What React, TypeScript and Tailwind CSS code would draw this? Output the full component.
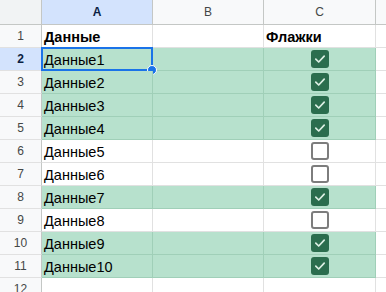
import React from "react";

type Row = { label: string; bold?: boolean; checked?: boolean | null; green?: boolean };

const ROWS: Row[] = [
  { label: "Данные", bold: true, checked: null },
  { label: "Данные1", checked: true, green: true },
  { label: "Данные2", checked: true, green: true },
  { label: "Данные3", checked: true, green: true },
  { label: "Данные4", checked: true, green: true },
  { label: "Данные5", checked: false },
  { label: "Данные6", checked: false },
  { label: "Данные7", checked: true, green: true },
  { label: "Данные8", checked: false },
  { label: "Данные9", checked: true, green: true },
  { label: "Данные10", checked: true, green: true },
  { label: "", checked: null },
];

function Checkbox({ checked }: { checked: boolean }) {
  if (!checked) {
    return (
      <div className="h-[18px] w-[18px] rounded-[3px] border-2 border-[#7d7d7d] bg-white" />
    );
  }
  return (
    <div className="flex h-[18px] w-[18px] items-center justify-center rounded-[3px] bg-[#2b6d4e]">
      <svg width="14" height="14" viewBox="0 0 14 14" fill="none">
        <path
          d="M2.8 7.2 L5.7 10 L11.2 4.2"
          stroke="#dcefe4"
          strokeWidth="1.7"
          strokeLinecap="round"
          strokeLinejoin="round"
        />
      </svg>
    </div>
  );
}

export default function App() {
  return (
    <div
      className="h-[292px] w-[386px] overflow-hidden bg-white text-black"
      style={{ fontFamily: '"Liberation Sans", Arial, sans-serif' }}
    >
      {/* column headers */}
      <div className="flex h-[25px] border-b border-[#c4c7c5] bg-[#f8f9fa] text-[12px] text-[#444746]">
        <div className="w-[42px] shrink-0 border-r border-[#c4c7c5] bg-[#f1f3f4]" />
        <div className="flex w-[111px] shrink-0 items-center justify-center border-r border-[#c4c7c5] bg-[#d3e3fd] font-bold text-[#0b1f44]">
          A
        </div>
        <div className="flex w-[111px] shrink-0 items-center justify-center border-r border-[#c4c7c5]">
          B
        </div>
        <div className="flex w-[112px] shrink-0 items-center justify-center border-r border-[#c4c7c5]">
          C
        </div>
        <div className="flex-1" />
      </div>

      {ROWS.map((r, i) => {
        const n = i + 1;
        const sel = n === 2;
        const cell = r.green
          ? "bg-[#b7e1cd] border-[#a0cfb8]"
          : "bg-white border-[#e1e1e1]";
        return (
          <div key={n} className="flex h-[23px]">
            <div
              className={`flex w-[42px] shrink-0 items-center justify-center border-r border-b border-r-[#c4c7c5] border-b-[#e1e1e1] text-[12px] ${
                sel ? "bg-[#d3e3fd] font-bold text-[#0b1f44]" : "bg-[#f8f9fa] text-[#444746]"
              }`}
            >
              {n}
            </div>
            <div
              className={`relative flex w-[111px] shrink-0 items-end border-r border-b pb-[1px] pl-[2px] text-[14.5px] leading-[18px] ${cell} ${
                r.bold ? "font-bold" : ""
              }`}
            >
              {r.label}
              {sel && (
                <div className="absolute -top-px -left-px -right-px -bottom-px border-2 border-[#1a73e8]">
                  <div className="absolute -right-[6px] -bottom-[6px] h-[10px] w-[10px] rounded-full border border-white bg-[#1a73e8]" />
                </div>
              )}
            </div>
            <div className={`w-[111px] shrink-0 border-r border-b ${cell}`} />
            <div
              className={`flex w-[112px] shrink-0 border-r border-b ${cell} ${
                r.checked === null ? "items-end pb-[1px] pl-[2px] leading-[18px]" : "items-center justify-center"
              }`}
            >
              {i === 0 && <span className="text-[14.5px] font-bold">Флажки</span>}
              {r.checked !== null && r.checked !== undefined && <Checkbox checked={r.checked} />}
            </div>
            <div className="flex-1 border-b border-[#e1e1e1]" />
          </div>
        );
      })}
    </div>
  );
}
